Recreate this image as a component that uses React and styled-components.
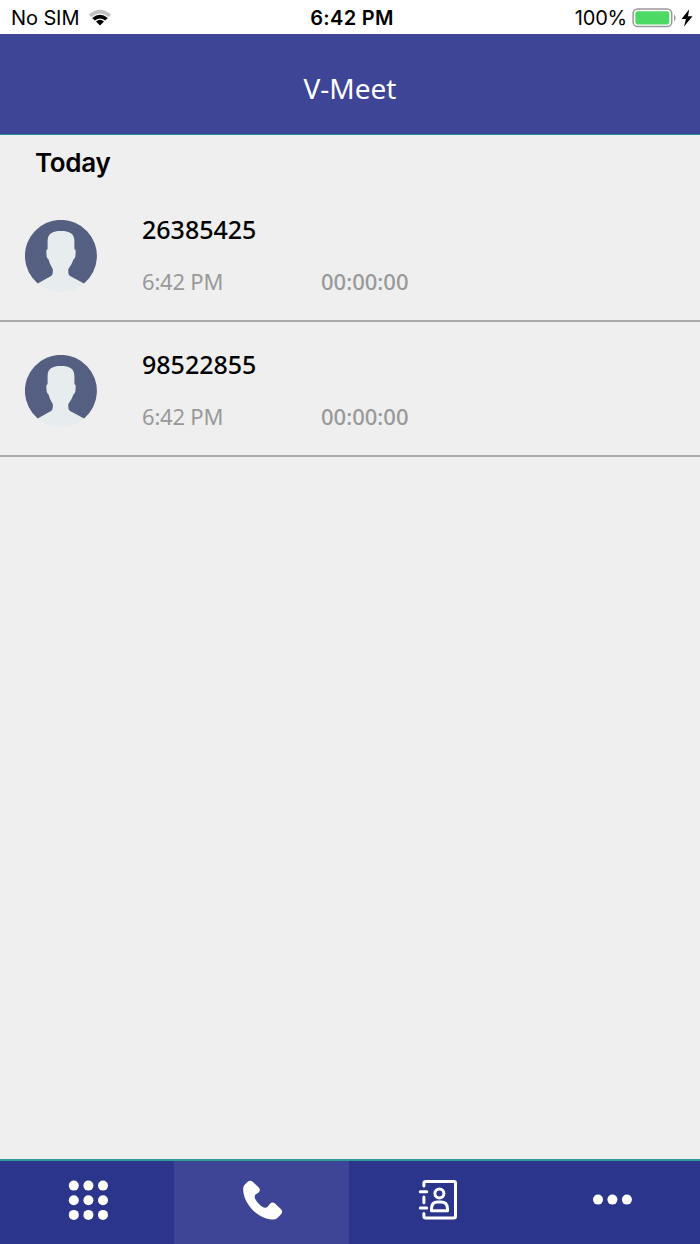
import React, { useState } from "react";
import styled, { createGlobalStyle } from "styled-components";

const theme = {
  header: "#3e4597",
  footer: "#2c358c",
  active: "#3e4597",
  background: "#efefef",
  muted: "#999999",
};

const calls = [
  { id: 1, number: "26385425", time: "6:42 PM", duration: "00:00:00" },
  { id: 2, number: "98522855", time: "6:42 PM", duration: "00:00:00" },
];

const WifiIcon = () => (
  <svg width="24" height="18" viewBox="0 0 24 18">
    <path d="M0.7 5.8 Q12 -4.2 23.3 5.8 L20.7 8.1 Q12 0.8 3.3 8.1Z" fill="#c2c2c2" />
    <path d="M4.2 9 Q12 2.4 19.8 9 L17.2 11.5 Q12 7.6 6.8 11.5Z" fill="#000" />
    <path d="M8 12.4 Q12 9 16 12.4 L12 16.5Z" fill="#000" />
  </svg>
);

const BatteryIcon = () => (
  <svg width="46" height="20" viewBox="0 0 46 20">
    <rect x="1.1" y="1" width="38.6" height="17.6" rx="4.6" fill="#fff" stroke="#999" strokeWidth="1.5" />
    <rect x="3.3" y="3.2" width="34" height="13.2" rx="2.3" fill="#4cd964" />
    <path d="M42 6.2 Q45.2 9.8 42 13.4Z" fill="#999" />
  </svg>
);

const BoltIcon = () => (
  <svg width="12" height="18" viewBox="0 0 12 18">
    <path d="M8.2 0.3 L0.6 10 H4.9 L3.1 17.5 L11.5 7.2 H7Z" fill="#000" />
  </svg>
);

const Avatar = () => (
  <svg width="72" height="72" viewBox="0 0 72 72">
    <circle cx="36" cy="36" r="36" fill="#e7ecee" />
    <path d="M12.7 63.4 A36 36 0 1 1 59.1 63.4 L45.5 56.3 Q43.3 55 43.3 52.5 V49.2 Q46.8 44.5 48.6 39.2 Q50.2 38.4 50.4 36.3 L50.7 31 Q50.7 29.6 49.4 29.3 V21 C49.4 13.5 44.5 11 36 11 C27.5 11 22.6 13.5 22.6 21 V29.3 Q21.3 29.6 21.3 31 L21.6 36.3 Q21.8 38.4 23.4 39.2 Q24.8 44.5 27.8 49.2 V52.5 Q27.8 55 25.6 56.3Z" fill="#545f81" />
  </svg>
);

const KeypadIcon = () => (
  <svg width="40" height="40" viewBox="0 0 40 40" fill="#fff">
    {[5.6, 20.3, 34.9].map(y =>
      [5.8, 20.4, 35].map(x => <circle key={`${x}-${y}`} cx={x} cy={y} r="5" />)
    )}
  </svg>
);

const PhoneIcon = () => (
  <svg width="40" height="40" viewBox="0 0 40 40">
    <path d="M4.4 2 Q7.2 -0.4 10 2 L15.8 7.6 Q18 10.1 15.6 12.4 L12.6 14.6 Q11.2 16.3 12 18.4 C13.8 22.3 17 25.8 20.8 27.4 Q22.8 28.1 24.6 26.7 L27.2 23.5 Q29.5 21.4 32 23.5 L37.8 29 Q40.3 31.5 38.1 34.3 L34.2 38.3 Q32.2 39.9 28 39.4 C13.5 37.6 1.4 24 0.2 10.8 Q0 7 1 5.4Z" fill="#fff" />
  </svg>
);

const ContactsIcon = () => (
  <svg width="40" height="40" viewBox="-0.7 0 40 40" fill="none" stroke="#fff" strokeWidth="3" strokeLinecap="round" strokeLinejoin="round">
    <path d="M5.2 6 V3.2 Q5.2 1.5 7 1.5 H35.2 Q36.8 1.5 36.8 3.2 V36.3 Q36.8 38 35.2 38 H7 Q5.2 38 5.2 36.3 V33.4" />
    <path d="M5.2 17 V22.7 M1.6 11.8 H8 M1.6 28 H8" />
    <circle cx="20.7" cy="13.5" r="4.5" />
    <path d="M12.8 30.8 V28.8 Q12.8 22.1 19 22.1 H22.2 Q28.8 22.1 28.8 28.8 V30.8Z" />
  </svg>
);

const MoreIcon = () => (
  <svg width="40" height="40" viewBox="0 0 40 40" fill="#fff">
    {[5, 19.4, 33.9].map(x => <circle key={x} cx={x} cy="19.6" r="5" />)}
  </svg>
);

const tabs = [
  { id: "keypad", label: "Keypad", Icon: KeypadIcon },
  { id: "recent", label: "Recent calls", Icon: PhoneIcon },
  { id: "contacts", label: "Contacts", Icon: ContactsIcon },
  { id: "more", label: "More", Icon: MoreIcon },
];

const CallRow = ({ call }) => (
  <Row>
    <Avatar />
    <CallInfo>
      <CallNumber>{call.number}</CallNumber>
      <CallMeta>
        <CallTime>{call.time}</CallTime>
        <CallDuration>{call.duration}</CallDuration>
      </CallMeta>
    </CallInfo>
  </Row>
);

const App = () => {
  const [activeTab, setActiveTab] = useState("recent");

  return (
    <>
      <GlobalStyle />
      <Screen>
        <StatusBar>
          <Carrier>
            <StatusText $spacing="-0.1px">No SIM</StatusText>
            <WifiIcon />
          </Carrier>
          <Clock>6:42 PM</Clock>
          <Power>
            <StatusText $spacing="-0.2px">100%</StatusText>
            <BatteryIcon />
            <BoltIcon />
          </Power>
        </StatusBar>
        <Header>
          <Title>V-Meet</Title>
        </Header>
        <Content>
          <SectionTitle>Today</SectionTitle>
          {calls.map(call => <CallRow key={call.id} call={call} />)}
        </Content>
        <TabBar>
          {tabs.map(({ id, label, Icon }) => (
            <Tab
              key={id}
              aria-label={label}
              $active={id === activeTab}
              onClick={() => setActiveTab(id)}
            >
              <Icon />
            </Tab>
          ))}
        </TabBar>
      </Screen>
    </>
  );
};

export default App;

const GlobalStyle = createGlobalStyle`
  * {
    box-sizing: border-box;
  }

  body {
    margin: 0;
    font-family: Inter, "Liberation Sans", sans-serif;
  }

  svg {
    display: block;
    flex-shrink: 0;
  }
`;

const Screen = styled.div`
  display: flex;
  flex-direction: column;
  height: 1244px;
  background: ${theme.background};
`;

const StatusBar = styled.div`
  display: grid;
  grid-template-columns: 1fr auto 1fr;
  align-items: center;
  height: 34px;
  padding: 1px 7px 0 11px;
  background: #fff;
  color: #000;
`;

const Carrier = styled.div`
  display: flex;
  align-items: center;
  gap: 9px;
`;

const Power = styled.div`
  display: flex;
  align-items: center;
  justify-content: flex-end;
  gap: 3px;

  svg:first-of-type {
    margin-left: 2px;
  }
`;

const StatusText = styled.span`
  font-size: 20px;
  line-height: 24px;
  letter-spacing: ${props => props.$spacing};
`;

const Clock = styled.span`
  font-size: 20px;
  line-height: 24px;
  font-weight: 600;
  letter-spacing: 0.3px;
`;

const Header = styled.header`
  display: flex;
  align-items: center;
  justify-content: center;
  height: 101px;
  padding-top: 7px;
  background: ${theme.header};
  border-bottom: 1px solid #218c98;
`;

const Title = styled.h1`
  margin: 0;
  font-family: "Noto Sans", sans-serif;
  font-size: 28px;
  font-weight: 400;
  line-height: 38px;
  color: #fff;
`;

const Content = styled.main`
  flex: 1;
`;

const SectionTitle = styled.h2`
  margin: 0;
  padding: 12px 0 0 35px;
  height: 52px;
  font-size: 26px;
  font-weight: 600;
  line-height: 32px;
  letter-spacing: -0.3px;
`;

const Row = styled.div`
  display: flex;
  align-items: center;
  gap: 45px;
  height: 135px;
  padding: 5px 25px 0;
  border-bottom: 2px solid #a9a9a9;
`;

const CallInfo = styled.div`
  display: flex;
  flex-direction: column;
  gap: 20px;
  padding-bottom: 3px;
  font-family: "Noto Sans", sans-serif;
`;

const CallNumber = styled.div`
  font-size: 25px;
  font-weight: 500;
  line-height: 32px;
`;

const CallMeta = styled.div`
  display: flex;
  font-size: 22px;
  line-height: 32px;
  color: ${theme.muted};
`;

const CallTime = styled.span`
  width: 179px;
  letter-spacing: -0.2px;
`;

const CallDuration = styled.span`
  font-weight: 500;
`;

const TabBar = styled.nav`
  display: grid;
  grid-template-columns: 174px 175px 175px 1fr;
  height: 85px;
  background: ${theme.footer};
  border-top: 2px solid #2f9c98;
`;

const Tab = styled.button`
  display: flex;
  align-items: center;
  justify-content: center;
  padding: 0 0 5px 2px;
  border: 0;
  background: ${props => (props.$active ? theme.active : "transparent")};
`;
